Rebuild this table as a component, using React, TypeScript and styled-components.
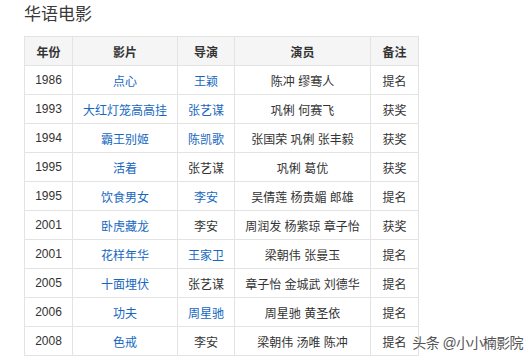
import { createGlobalStyle, styled } from "styled-components";

type Film = {
  year: number;
  title: string;
  director: string;
  directorLink: boolean;
  cast: string;
  note: string;
};

const films: Film[] = [
  { year: 1986, title: "点心", director: "王颖", directorLink: true, cast: "陈冲 缪骞人", note: "提名" },
  { year: 1993, title: "大红灯笼高高挂", director: "张艺谋", directorLink: true, cast: "巩俐 何赛飞", note: "获奖" },
  { year: 1994, title: "霸王别姬", director: "陈凯歌", directorLink: true, cast: "张国荣 巩俐 张丰毅", note: "获奖" },
  { year: 1995, title: "活着", director: "张艺谋", directorLink: false, cast: "巩俐 葛优", note: "获奖" },
  { year: 1995, title: "饮食男女", director: "李安", directorLink: true, cast: "吴倩莲 杨贵媚 郎雄", note: "提名" },
  { year: 2001, title: "卧虎藏龙", director: "李安", directorLink: false, cast: "周润发 杨紫琼 章子怡", note: "获奖" },
  { year: 2001, title: "花样年华", director: "王家卫", directorLink: true, cast: "梁朝伟 张曼玉", note: "提名" },
  { year: 2005, title: "十面埋伏", director: "张艺谋", directorLink: false, cast: "章子怡 金城武 刘德华", note: "提名" },
  { year: 2006, title: "功夫", director: "周星驰", directorLink: true, cast: "周星驰 黄圣依", note: "提名" },
  { year: 2008, title: "色戒", director: "李安", directorLink: false, cast: "梁朝伟 汤唯 陈冲", note: "提名" },
];

const GlobalStyle = createGlobalStyle`
  body {
    margin: 0;
    background: #fff;
    font-family: "Liberation Sans", "Noto Sans CJK SC", sans-serif;
  }
`;

const Page = styled.div`
  position: relative;
  width: 531px;
  height: 362px;
  overflow: hidden;
  padding: 4px 0 0 24px;
  box-sizing: border-box;
`;

const Heading = styled.h2`
  margin: 0 0 10px;
  font-size: 17px;
  font-weight: normal;
  line-height: 22px;
  color: #3a3a3a;
`;

const Table = styled.table`
  border-collapse: collapse;
  font-size: 12px;
  color: #333;
`;

const Th = styled.th<{ $w: number }>`
  width: ${(p) => p.$w}px;
  height: 28px;
  padding: 0;
  background: #f5f5f5;
  border: 1px solid #e3e3e3;
  font-weight: bold;
  text-align: center;
`;

const Td = styled.td`
  height: 28px;
  padding: 0;
  border: 1px solid #e3e3e3;
  text-align: center;
  white-space: nowrap;
`;

const Link = styled.span<{ $on: boolean }>`
  color: ${(p) => (p.$on ? "#1567c0" : "#333")};
`;

const Watermark = styled.div`
  position: absolute;
  right: 8px;
  bottom: 10px;
  font-size: 14px;
  color: #555;
  text-shadow: 0 0 2px #fff;
  letter-spacing: -0.6px;
`;

export default function App() {
  return (
    <Page>
      <GlobalStyle />
      <Heading>华语电影</Heading>
      <Table>
        <thead>
          <tr>
            <Th $w={47}>年份</Th>
            <Th $w={104}>影片</Th>
            <Th $w={56}>导演</Th>
            <Th $w={135}>演员</Th>
            <Th $w={47}>备注</Th>
          </tr>
        </thead>
        <tbody>
          {films.map((f, i) => (
            <tr key={i}>
              <Td>{f.year}</Td>
              <Td>
                <Link $on>{f.title}</Link>
              </Td>
              <Td>
                <Link $on={f.directorLink}>{f.director}</Link>
              </Td>
              <Td>{f.cast}</Td>
              <Td>{f.note}</Td>
            </tr>
          ))}
        </tbody>
      </Table>
      <Watermark>头条 @小小楠影院</Watermark>
    </Page>
  );
}
